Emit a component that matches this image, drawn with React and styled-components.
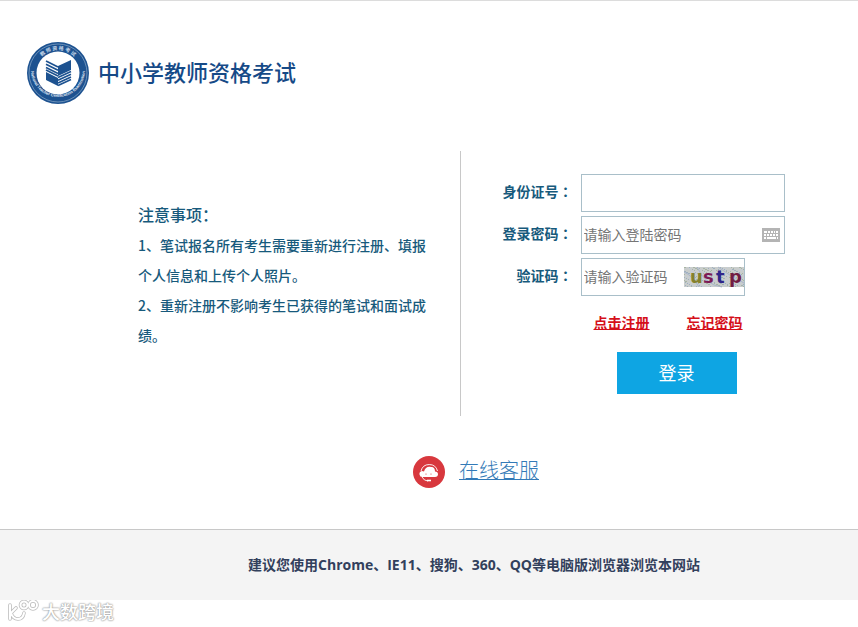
import React from 'react';
import styled, { createGlobalStyle } from 'styled-components';

const GlobalStyle = createGlobalStyle`
  * {
    box-sizing: border-box;
  }

  body {
    margin: 0;
    background: #fff;
    color: #175a7c;
    font-family: 'Noto Sans CJK SC', sans-serif;
    font-size: 14px;
  }
`;

const Page = styled.div`
  border-top: 1px solid #dcdcdc;
`;

const Header = styled.header`
  display: flex;
  align-items: center;
  gap: 8px;
  padding: 40px 26px 46px;
`;

const SiteName = styled.h1`
  margin: 0;
  padding-bottom: 4px;
  color: #164a87;
  font-size: 22px;
  font-weight: 500;
  line-height: 32px;
`;

const Main = styled.main`
  display: grid;
  grid-template-columns: 460fr 397fr;
`;

const Notes = styled.section`
  padding: 47px 24px 66px 138px;
  border-right: 1px solid #c8c8c8;
  font-weight: 500;
  line-height: 30px;
`;

const NotesTitle = styled.h2`
  margin: 0;
  font-size: 16px;
  font-weight: 500;
  line-height: 32px;
`;

const Note = styled.p`
  margin: 0;
`;

const LoginForm = styled.form`
  display: flex;
  flex-direction: column;
  gap: 4px;
  padding: 23px 24px 0 42px;
`;

const Row = styled.div`
  display: flex;
  align-items: center;
  gap: 8px;
`;

const Label = styled.label`
  width: 70px;
  padding-bottom: 4px;
  text-align: right;
  font-weight: 700;
  white-space: nowrap;
`;

// The TC face centres the full-width colon in its box
const Colon = styled.span`
  font-family: 'Noto Sans CJK TC', sans-serif;
`;

const Field = styled.div`
  display: flex;
  align-items: center;
  width: ${props => props.$width};
  height: 38px;
  border: 1px solid #a9bfc9;
  padding-right: ${props => props.$padEnd || '0'};
`;

const Input = styled.input`
  flex: 1;
  min-width: 0;
  height: 100%;
  padding: 0 2px 2px;
  border: 0;
  outline: 0;
  background: transparent;
  color: #333;
  font: inherit;

  &::placeholder {
    color: #757575;
    opacity: 1;
  }
`;

const Links = styled.nav`
  display: flex;
  gap: 37px;
  padding: 10px 0 0 91px;
`;

const RedLink = styled.a`
  color: #d5101a;
  font-weight: 700;
  line-height: 24px;
`;

const SubmitButton = styled.button`
  width: 120px;
  height: 42px;
  margin: 14px 0 0 114px;
  padding: 0 0 2px;
  border: 0;
  background: #0ea5e3;
  color: #fff;
  font-family: inherit;
  font-size: 18px;
  cursor: pointer;
`;

const Service = styled.section`
  display: flex;
  justify-content: center;
  align-items: center;
  gap: 14px;
  padding: 40px 0 41px 94px;
`;

const ServiceLink = styled.a`
  padding-bottom: 4px;
  color: #337ab7;
  font-size: 20px;
  font-weight: 300;
  line-height: 28px;
  text-decoration-thickness: 1px;
`;

const Footer = styled.footer`
  padding: 20px 0 20px 90px;
  border-top: 1px solid #c8c8c8;
  background: #f4f4f4;
  color: #32405c;
  font-family: 'Open Sans', 'Noto Sans CJK SC', sans-serif;
  font-weight: 700;
  line-height: 30px;
  text-align: center;
`;

const Watermark = styled.div`
  display: flex;
  align-items: center;
  gap: 3px;
  padding-left: 7px;
  color: #fff;
  font-size: 18px;
  font-weight: 500;
  line-height: 22px;
  text-shadow: 0 0 1px #999, 0 0 2px #aaa, 0 0 2px #bbb;
`;

const Emblem = () => (
  <svg width="64" height="64" viewBox="0 0 64 64" role="img" aria-label="NTCE">
    <defs>
      <path id="arcTop" d="M9 32a23 23 0 0 1 46 0" />
      <path id="arcBottom" d="M5 29a27 27 0 0 0 54 0" />
    </defs>
    <circle cx="32" cy="32" r="31" fill="#1d5290" />
    <circle cx="32" cy="32" r="29" fill="none" stroke="#7e9fc3" strokeWidth="0.8" />
    <circle cx="32" cy="32" r="21.5" fill="#fff" />
    <text fill="#c9d9ea" fontSize="5" fontWeight="700">
      <textPath href="#arcTop" startOffset="50%" textAnchor="middle">教 师 资 格 考 试</textPath>
    </text>
    <text fill="#e6eef7" fontSize="4" fontWeight="700" fontFamily="Liberation Sans, sans-serif">
      <textPath href="#arcBottom" startOffset="50%" textAnchor="middle">National Teacher Certification Examination</textPath>
    </text>
    <path fill="#1d5290" d="M32 25l13-6v10l-13 6zM20 31l12 6v8l-12-6z" />
    <path
      fill="none"
      stroke="#1d5290"
      strokeWidth="1.7"
      d="M20 20l12 6M20 23.200l12 6M20 26.400l12 6M20 29l12 6M32 36.500l13-6M32 39.200l13-6M32 41.900l13-6M32 44.400l13-6"
    />
  </svg>
);

const KeyboardIcon = () => (
  <svg width="18" height="14" viewBox="0 0 18 14" aria-hidden="true">
    <path fill="#b4b4b4" d="M0 0h18v14H0z" />
    <path
      fill="#fff"
      d="M2 3h3v2H2zM6 3h2v2H6zM9 3h2v2H9zM12 3h1v2h-1zM14 3h2v2h-2zM2 6h2v2H2zM5 6h2v2H5zM8 6h2v2H8zM11 6h2v2h-2zM14 6h2v2h-2zM2 9h2v2H2zM5 9h9v2H5zM15 9h1v2h-1z"
    />
  </svg>
);

const speckColors = ['#a8b5a4', '#e6e0cf', '#9fb0bf', '#d6b9bd', '#c5ccd9', '#e4e8ea'];
const specks = Array.from({ length: 260 }, (_, i) => ({
  x: (i * 37 + (i % 7) * 11) % 60,
  y: (i * 13 + (i % 11) * 5) % 20,
  fill: speckColors[(i * 5 + (i % 4)) % speckColors.length]
}));

const letters = [
  { char: 'u', x: 6, fill: '#85812c' },
  { char: 's', x: 19, fill: '#7c1a55' },
  { char: 't', x: 32, fill: '#30268a' },
  { char: 'p', x: 45, fill: '#721d42' }
];

const Captcha = () => (
  <svg width="60" height="20" viewBox="0 0 60 20" overflow="visible" role="img" aria-label="ustp">
    <path fill="#c9cdcc" d="M0 0h60v20H0z" />
    {specks.map((s, i) => (
      <rect key={i} x={s.x} y={s.y} width="1" height="1" fill={s.fill} />
    ))}
    <path d="M0 5q9 4 15 15M13 0q8 18 25 20M34 0q12 9 26 16" fill="none" stroke="#a9b5cb" />
    {letters.map(l => (
      <text key={l.char} x={l.x} y="16" fill={l.fill} fontSize="18" fontWeight="700" fontFamily="DejaVu Sans, sans-serif">
        {l.char}
      </text>
    ))}
  </svg>
);

const ServiceIcon = () => (
  <svg width="32" height="32" viewBox="0 0 32 32" aria-hidden="true">
    <circle cx="16" cy="16" r="16" fill="#d8383e" />
    <path d="M8 15a8.500 8.500 0 0 1 16.500 0" fill="none" stroke="#fff" strokeWidth="0.9" />
    <path d="M10 21a3 3 0 0 1-1-6q1 0 2 .5c1-4 4-5.500 7-4.500 3 0 4 2 4 4.500 4 0 4 5.500 0 5.500z" fill="#fff" />
    <path d="M9 21q2 4 6 4" fill="none" stroke="#fff" strokeWidth="0.9" />
    <path d="M14 24.500h4" stroke="#fff" strokeWidth="1.6" />
    <circle cx="13" cy="18" r="0.6" fill="#d8383e" />
    <circle cx="18" cy="18" r="0.6" fill="#d8383e" />
  </svg>
);

const WatermarkIcon = () => (
  <svg width="32" height="22" viewBox="0 0 32 22" aria-hidden="true">
    {[['#bdbdbd', 3.6], ['#fff', 2]].map(([stroke, width]) => (
      <g key={stroke} fill="none" stroke={stroke} strokeWidth={width} strokeLinecap="round">
        <path d="M3 5v14M9 8l-5 5q2 6 7 6 5 0 6-6" />
        <circle cx="17" cy="5" r="3.500" />
        <circle cx="26" cy="5" r="4" />
      </g>
    ))}
  </svg>
);

const App = () => {
  return (
    <Page>
      <GlobalStyle />
      <Header>
        <Emblem />
        <SiteName>中小学教师资格考试</SiteName>
      </Header>

      <Main>
        <Notes>
          <NotesTitle>注意事项：</NotesTitle>
          <Note>1、笔试报名所有考生需要重新进行注册、填报个人信息和上传个人照片。</Note>
          <Note>2、重新注册不影响考生已获得的笔试和面试成绩。</Note>
        </Notes>

        <LoginForm onSubmit={e => e.preventDefault()}>
          <Row>
            <Label htmlFor="idNumber">身份证号<Colon>：</Colon></Label>
            <Field $width="204px">
              <Input id="idNumber" type="text" />
            </Field>
          </Row>
          <Row>
            <Label htmlFor="password">登录密码<Colon>：</Colon></Label>
            <Field $width="204px" $padEnd="4px">
              <Input id="password" type="password" placeholder="请输入登陆密码" />
              <KeyboardIcon />
            </Field>
          </Row>
          <Row>
            <Label htmlFor="captcha">验证码<Colon>：</Colon></Label>
            <Field $width="164px">
              <Input id="captcha" type="text" placeholder="请输入验证码" />
              <Captcha />
            </Field>
          </Row>
          <Links>
            <RedLink href="#register">点击注册</RedLink>
            <RedLink href="#forgot">忘记密码</RedLink>
          </Links>
          <SubmitButton type="submit">登录</SubmitButton>
        </LoginForm>
      </Main>

      <Service>
        <ServiceIcon />
        <ServiceLink href="#service">在线客服</ServiceLink>
      </Service>

      <Footer>建议您使用Chrome、IE11、搜狗、360、QQ等电脑版浏览器浏览本网站</Footer>

      <Watermark>
        <WatermarkIcon />
        大数跨境
      </Watermark>
    </Page>
  );
};

export default App;
